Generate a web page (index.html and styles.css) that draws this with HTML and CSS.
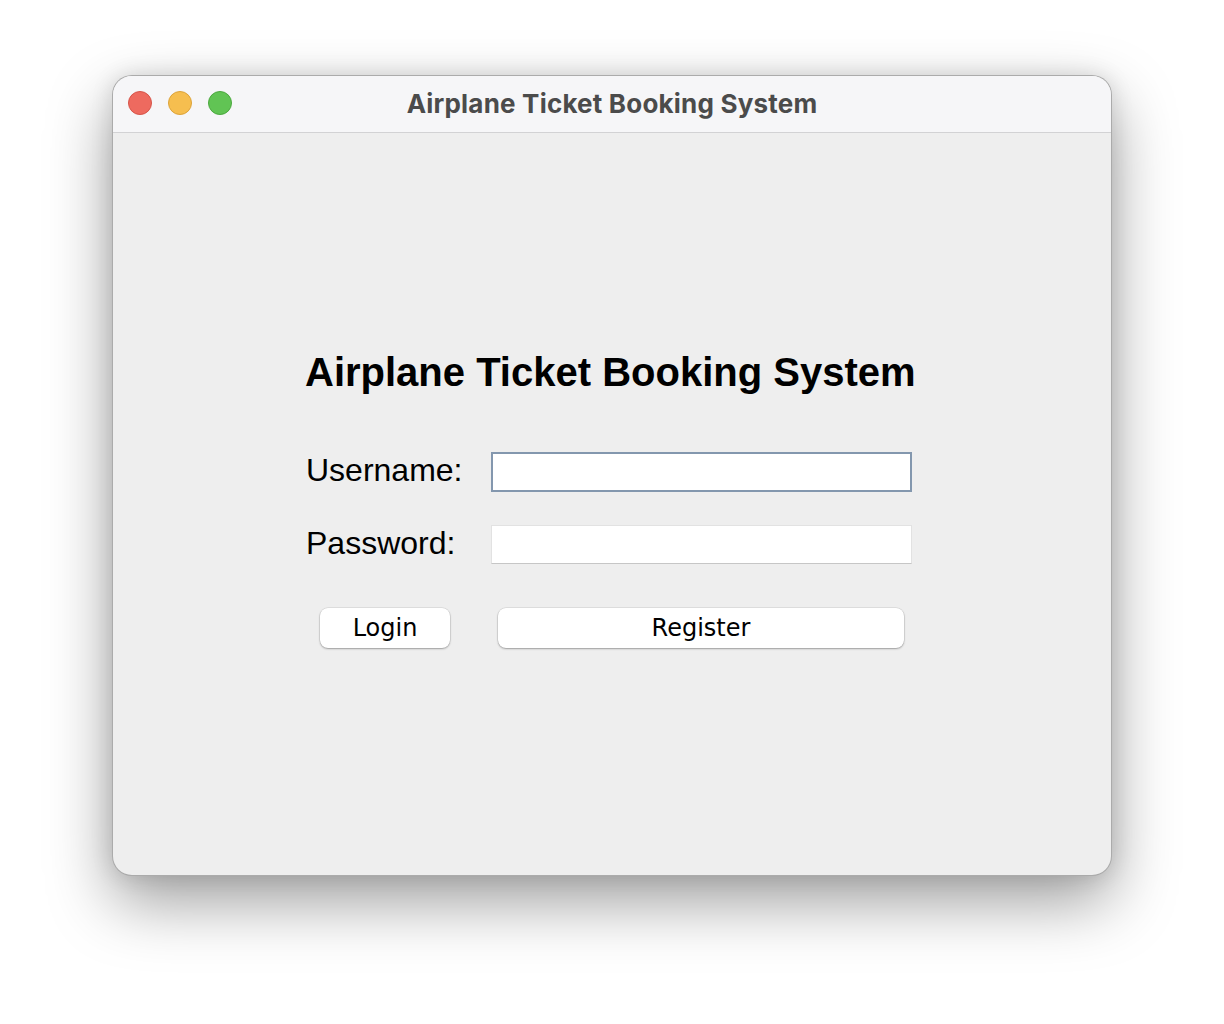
FILE: index.html
```html
<!DOCTYPE html>
<html>
<head>
<meta charset="utf-8">
<link rel="stylesheet" href="styles.css">
</head>
<body>
<div class="window">
  <div class="titlebar">
    <div class="lights">
      <span class="light red"></span>
      <span class="light yellow"></span>
      <span class="light green"></span>
    </div>
    <div class="wtitle">Airplane Ticket Booking System</div>
  </div>
  <div class="content">
    <div class="form">
      <h1 class="heading">Airplane Ticket Booking System</h1>
      <div class="grid">
        <label class="label">Username:</label>
        <div class="field focused"></div>
        <label class="label">Password:</label>
        <div class="field"></div>
        <div class="btn login">Login</div>
        <div class="btn register">Register</div>
      </div>
    </div>
  </div>
</div>
</body>
</html>
```
FILE: styles.css
```css
html, body {
  margin: 0;
  padding: 0;
  background: #ffffff;
}
body {
  padding: 75px 0 0 112px;
  height: 1024px;
  box-sizing: border-box;
  overflow: hidden;
}
.window {
  width: 1000px;
  height: 801px;
  box-sizing: border-box;
  border: 1px solid rgba(0,0,0,0.28);
  border-radius: 20px;
  background: #eeeeee;
  overflow: hidden;
  display: flex;
  flex-direction: column;
  box-shadow: 0 26px 64px rgba(0,0,0,0.38), 0 0 22px rgba(0,0,0,0.12);
}
.titlebar {
  height: 56px;
  flex: none;
  background: #f6f6f8;
  border-bottom: 1px solid #d2d2d4;
  position: relative;
  display: flex;
  align-items: center;
  justify-content: center;
}
.lights {
  position: absolute;
  left: 15px;
  top: 15px;
  display: flex;
  gap: 16px;
}
.light {
  width: 22px;
  height: 22px;
  border-radius: 50%;
  display: block;
}
.red { background: #ee6a5f; border: 1px solid #d65449; }
.yellow { background: #f6be4f; border: 1px solid #dca33a; }
.green { background: #61c454; border: 1px solid #4ca83f; }
.wtitle {
  font-family: Inter, "Liberation Sans", sans-serif;
  font-weight: 700;
  font-size: 26px;
  color: #4b4b4b;
  letter-spacing: 0.2px;
  margin-top: -1px;
}
.content {
  flex: 1;
  display: flex;
  flex-direction: column;
  align-items: center;
  padding-top: 216px;
}
.form {
  width: 612px;
}
.heading {
  margin: 0 0 0 -1px;
  font-family: "Liberation Sans", Arial, sans-serif;
  font-weight: 700;
  font-size: 40px;
  line-height: 46px;
  color: #000;
  white-space: nowrap;
}
.grid {
  margin-top: 57px;
  display: grid;
  grid-template-columns: 158px 421px;
  column-gap: 27px;
  grid-template-rows: 40px 40px 40px;
  row-gap: 33px;
}
.grid .btn { margin-top: 10px; }
.label {
  font-family: "Liberation Sans", Arial, sans-serif;
  font-size: 32px;
  color: #000;
  align-self: center;
  line-height: 36px;
  padding-bottom: 4px;
}
.field {
  background: #ffffff;
  box-sizing: border-box;
  border-top: 1px solid #e2e2e2;
  border-left: 1px solid #e2e2e2;
  border-right: 1px solid #e2e2e2;
  border-bottom: 1px solid #c6c6c6;
  height: 39px;
}
.field.focused {
  height: 40px;
  border: 2px solid #8397ae;
}
.btn {
  height: 40px;
  box-sizing: border-box;
  background: #ffffff;
  border-radius: 8px;
  box-shadow: 0 0 0 0.5px rgba(0,0,0,0.12), 0 1px 2px rgba(0,0,0,0.3);
  font-family: "DejaVu Sans", sans-serif;
  font-size: 24px;
  color: #000;
  display: flex;
  align-items: center;
  justify-content: center;
}
.login {
  width: 130px;
  justify-self: center;
}
.register {
  margin-left: 7px;
  margin-right: 8px;
}
```
